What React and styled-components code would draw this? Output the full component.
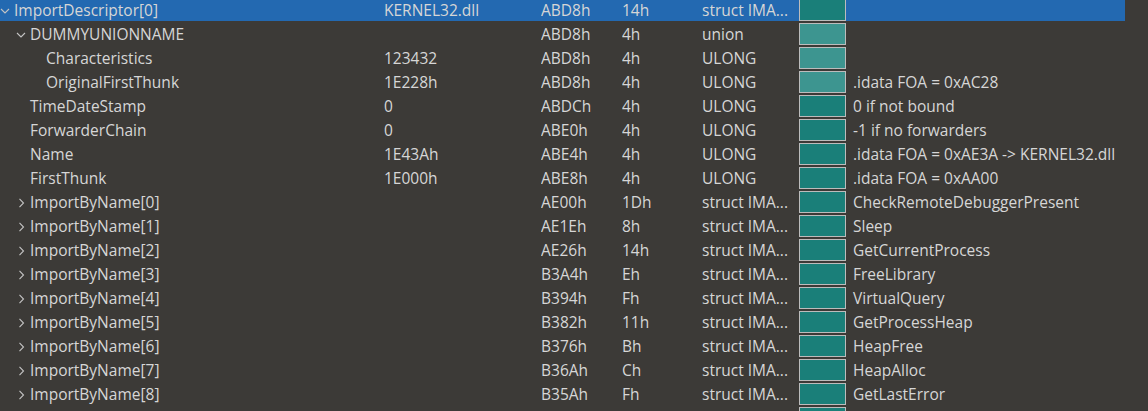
import React from "react";
import styled, { createGlobalStyle } from "styled-components";

const Global = createGlobalStyle`
  html, body { margin: 0; padding: 0; background: #3c3a37; overflow: hidden; }
  body { font-family: "Open Sans", "Noto Sans", sans-serif; }
`;

const Tree = styled.div`
  width: 1148px;
  height: 411px;
  overflow: hidden;
  background: #3c3a37;
`;

const List = styled.div`
  margin-top: -3px;
  width: 1125px;
`;

const Row = styled.div`
  display: grid;
  grid-template-columns: 384px 157px 81px 80px 97px 47px 1fr;
  align-items: start;
  height: 24px;
  background: ${(p) => (p.$selected ? "#2369b1" : "transparent")};
  color: #d6d6d6;
  font-size: 15.5px;
  line-height: 24px;
  white-space: nowrap;
`;

const NameCell = styled.div`
  display: flex;
  align-items: center;
  height: 24px;
  padding-top: 1px;
  padding-left: ${(p) => p.$level * 16}px;
  overflow: hidden;
`;

const Twisty = styled.span`
  width: 14px;
  height: 24px;
  flex: 0 0 14px;
  display: flex;
  align-items: center;
  justify-content: flex-start;
  padding-top: 1px;
  color: #c4c4c4;
`;

const Cell = styled.div`
  padding-top: 1px;
  overflow: hidden;
`;

const Swatch = styled.div`
  box-sizing: border-box;
  height: 22px;
  margin-top: 2px;
  border: 1px solid #bcbcbc;
  background: ${(p) => (p.$light ? "#3d9590" : "#1a7f79")};
`;

const Comment = styled.div`
  padding-top: 1px;
  padding-left: 7px;
  overflow: hidden;
`;

const Chevron = ({ open }) => (
  <svg width="10" height="10" viewBox="0 0 10 10" fill="none" stroke="currentColor" strokeWidth="1.1">
    {open ? <path d="M1 3 L5 7 L9 3" /> : <path d="M3.5 0.8 L7.5 5 L3.5 9.2" />}
  </svg>
);

const rows = [
  { name: "ImportDescriptor[0]", level: 0, tw: "open", value: "KERNEL32.dll", start: "ABD8h", size: "14h", type: "struct IMA...", selected: true },
  { name: "DUMMYUNIONNAME", level: 1, tw: "open", value: "", start: "ABD8h", size: "4h", type: "union", light: true },
  { name: "Characteristics", level: 2, value: "123432", start: "ABD8h", size: "4h", type: "ULONG", light: true },
  { name: "OriginalFirstThunk", level: 2, value: "1E228h", start: "ABD8h", size: "4h", type: "ULONG", light: true, comment: ".idata FOA = 0xAC28" },
  { name: "TimeDateStamp", level: 1, value: "0", start: "ABDCh", size: "4h", type: "ULONG", comment: "0 if not bound" },
  { name: "ForwarderChain", level: 1, value: "0", start: "ABE0h", size: "4h", type: "ULONG", comment: "-1 if no forwarders" },
  { name: "Name", level: 1, value: "1E43Ah", start: "ABE4h", size: "4h", type: "ULONG", comment: ".idata FOA = 0xAE3A -> KERNEL32.dll" },
  { name: "FirstThunk", level: 1, value: "1E000h", start: "ABE8h", size: "4h", type: "ULONG", comment: ".idata FOA = 0xAA00" },
  ...[
    ["AE00h", "1Dh", "CheckRemoteDebuggerPresent"],
    ["AE1Eh", "8h", "Sleep"],
    ["AE26h", "14h", "GetCurrentProcess"],
    ["B3A4h", "Eh", "FreeLibrary"],
    ["B394h", "Fh", "VirtualQuery"],
    ["B382h", "11h", "GetProcessHeap"],
    ["B376h", "Bh", "HeapFree"],
    ["B36Ah", "Ch", "HeapAlloc"],
    ["B35Ah", "Fh", "GetLastError"],
  ].map(([start, size, comment], i) => ({
    name: `ImportByName[${i}]`,
    level: 1,
    tw: "closed",
    value: "",
    start,
    size,
    type: "struct IMA...",
    comment,
  })),
  { name: "", level: 1, value: "", start: "", size: "", type: "" },
];

export default function App() {
  return (
    <>
      <Global />
      <Tree>
        <List>
          {rows.map((r, i) => (
            <Row key={i} $selected={r.selected}>
              <NameCell $level={r.level}>
                <Twisty>{r.tw ? <Chevron open={r.tw === "open"} /> : null}</Twisty>
                <span>{r.name}</span>
              </NameCell>
              <Cell>{r.value}</Cell>
              <Cell>{r.start}</Cell>
              <Cell>{r.size}</Cell>
              <Cell>{r.type}</Cell>
              <Swatch $light={r.light} />
              <Comment>{r.comment || ""}</Comment>
            </Row>
          ))}
        </List>
      </Tree>
    </>
  );
}
